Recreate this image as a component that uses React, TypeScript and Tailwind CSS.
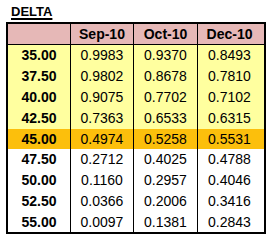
import React from 'react';

const cols = ['Sep-10', 'Oct-10', 'Dec-10'];

const rows = [
  { strike: '35.00', v: ['0.9983', '0.9370', '0.8493'], bg: 'bg-[#ffff9f]', h: 'h-[21px]' },
  { strike: '37.50', v: ['0.9802', '0.8678', '0.7810'], bg: 'bg-[#ffff9f]', h: 'h-[21px]' },
  { strike: '40.00', v: ['0.9075', '0.7702', '0.7102'], bg: 'bg-[#ffff9f]', h: 'h-[21px]' },
  { strike: '42.50', v: ['0.7363', '0.6533', '0.6315'], bg: 'bg-[#ffff9f]', h: 'h-[21px]' },
  { strike: '45.00', v: ['0.4974', '0.5258', '0.5531'], bg: 'bg-[#fcbf0c]', h: 'h-[20px]' },
  { strike: '47.50', v: ['0.2712', '0.4025', '0.4788'], bg: 'bg-white', h: 'h-[21px]' },
  { strike: '50.00', v: ['0.1160', '0.2957', '0.4046'], bg: 'bg-white', h: 'h-[21px]' },
  { strike: '52.50', v: ['0.0366', '0.2006', '0.3416'], bg: 'bg-white', h: 'h-[21px]' },
  { strike: '55.00', v: ['0.0097', '0.1381', '0.2843'], bg: 'bg-white', h: 'h-[20px]' },
];

const widths = ['w-[63px]', 'w-[63px]', 'w-[64px]', 'w-[63px]'];

export default function App() {
  return (
    <div className="w-[269px] h-[241px] bg-white text-black" style={{ fontFamily: '"Liberation Sans", Arial, sans-serif' }}>
      <div className="h-[22px] pl-[11px] pt-[4px]">
        <span className="text-[13px] leading-[15px] font-bold underline underline-offset-[2px] decoration-2 block">DELTA</span>
      </div>

      <div className="ml-[6px] w-[260px] border-2 border-black">
        {/* header */}
        <div className="flex h-[21px] bg-[#e6b8b7] border-b border-black">
          {['', ...cols].map((c, i) => (
            <div
              key={i}
              className={`${widths[i]} ${i < 3 ? 'border-r border-black' : ''} flex items-center justify-center text-[14px] font-bold`}
            >
              {c}
            </div>
          ))}
        </div>

        {rows.map((r) => (
          <div key={r.strike} className={`flex ${r.h} ${r.bg}`}>
            {[r.strike, ...r.v].map((c, i) => (
              <div
                key={i}
                className={`${widths[i]} ${i < 3 ? 'border-r border-black' : ''} flex items-center justify-center text-[14px] ${i === 0 ? 'font-bold' : ''}`}
              >
                {c}
              </div>
            ))}
          </div>
        ))}
      </div>
    </div>
  );
}
